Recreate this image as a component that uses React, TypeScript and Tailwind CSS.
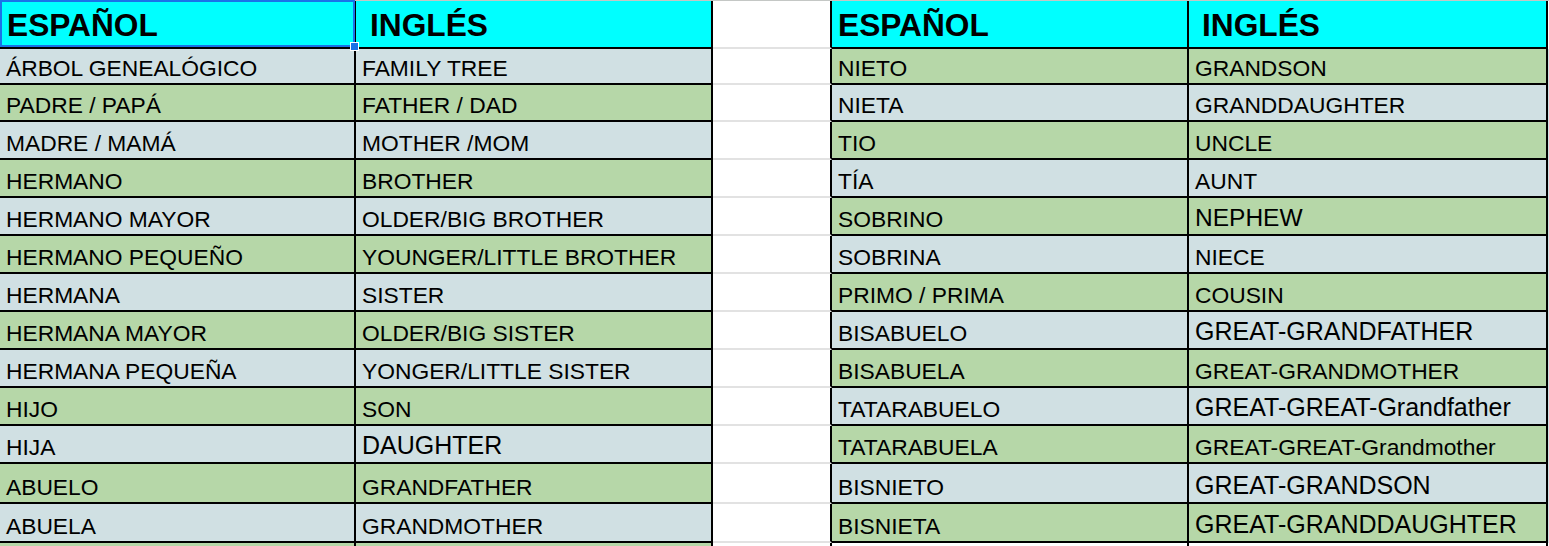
import React from "react";

type Row = {
  h: string;
  ca: string;
  a: string;
  b: string;
  bBig?: string;
  cd: string;
  d: string;
  e: string;
  eBig?: string;
};

const BLUE = "bg-[#d0e0e3]";
const GREEN = "bg-[#b6d7a8]";

const rows: Row[] = [
  { h: "h-[36px]", ca: BLUE, a: "ÁRBOL GENEALÓGICO", b: "FAMILY TREE", cd: GREEN, d: "NIETO", e: "GRANDSON" },
  { h: "h-[37px]", ca: GREEN, a: "PADRE / PAPÁ", b: "FATHER / DAD", cd: BLUE, d: "NIETA", e: "GRANDDAUGHTER" },
  { h: "h-[38px]", ca: BLUE, a: "MADRE / MAMÁ", b: "MOTHER /MOM", cd: GREEN, d: "TIO", e: "UNCLE" },
  { h: "h-[38px]", ca: GREEN, a: "HERMANO", b: "BROTHER", cd: BLUE, d: "TÍA", e: "AUNT" },
  { h: "h-[38px]", ca: BLUE, a: "HERMANO MAYOR", b: "OLDER/BIG BROTHER", cd: GREEN, d: "SOBRINO", e: "NEPHEW", eBig: "text-[24.5px]" },
  { h: "h-[38px]", ca: GREEN, a: "HERMANO PEQUEÑO", b: "YOUNGER/LITTLE BROTHER", cd: BLUE, d: "SOBRINA", e: "NIECE" },
  { h: "h-[38px]", ca: BLUE, a: "HERMANA", b: "SISTER", cd: GREEN, d: "PRIMO / PRIMA", e: "COUSIN" },
  { h: "h-[38px]", ca: GREEN, a: "HERMANA MAYOR", b: "OLDER/BIG SISTER", cd: BLUE, d: "BISABUELO", e: "GREAT-GRANDFATHER", eBig: "text-[25px]" },
  { h: "h-[38px]", ca: BLUE, a: "HERMANA PEQUEÑA", b: "YONGER/LITTLE SISTER", cd: GREEN, d: "BISABUELA", e: "GREAT-GRANDMOTHER" },
  { h: "h-[38px]", ca: GREEN, a: "HIJO", b: "SON", cd: BLUE, d: "TATARABUELO", e: "GREAT-GREAT-Grandfather", eBig: "text-[25px]" },
  { h: "h-[38px]", ca: BLUE, a: "HIJA", b: "DAUGHTER", bBig: "text-[25px]", cd: GREEN, d: "TATARABUELA", e: "GREAT-GREAT-Grandmother" },
  { h: "h-[40px]", ca: GREEN, a: "ABUELO", b: "GRANDFATHER", cd: BLUE, d: "BISNIETO", e: "GREAT-GRANDSON", eBig: "text-[25px]" },
  { h: "h-[39px]", ca: BLUE, a: "ABUELA", b: "GRANDMOTHER", cd: GREEN, d: "BISNIETA", e: "GREAT-GRANDDAUGHTER", eBig: "text-[25px]" },
];

const cellBase = "flex items-end pb-[2px] pl-[6px] border-r-2 border-b-2 border-black whitespace-nowrap overflow-hidden";

export default function App() {
  return (
    <div
      className="w-[1549px] h-[546px] overflow-hidden bg-white text-black text-[22.8px] leading-[1.15]"
      style={{ fontFamily: '"Liberation Sans", Arial, sans-serif' }}
    >
      {/* header */}
      <div className="relative flex h-[49px] border-t border-[#c4c7c5] font-bold text-[31.7px]">
        <div className="flex items-end pb-[4px] pl-[7px] w-[356px] border-r-2 border-b-2 border-black bg-[#00ffff]">ESPAÑOL</div>
        <div className="flex items-end pb-[4px] pl-[14px] w-[357px] border-r-2 border-b-2 border-black bg-[#00ffff]">INGLÉS</div>
        <div className="w-[119px] border-r-2 border-b-2 border-r-black border-b-[#e2e2e2] bg-white" />
        <div className="flex items-end pb-[4px] pl-[6px] w-[357px] border-r-2 border-b-2 border-black bg-[#00ffff]">ESPAÑOL</div>
        <div className="flex items-end pb-[4px] pl-[13px] w-[359px] border-r-2 border-b-2 border-black bg-[#00ffff]">INGLÉS</div>
        <div className="flex-1 bg-white" />
        {/* selection outline */}
        <div className="absolute left-0 top-[-1px] w-[355px] h-[47px] border-2 border-[#1a73e8]" />
        <div className="absolute left-[350px] top-[41px] w-[9px] h-[9px] bg-[#1a73e8] border border-white" />
      </div>

      {rows.map((r, i) => (
        <div key={i} className={`flex ${r.h}`}>
          <div className={`${cellBase} w-[356px] ${r.ca}`}>{r.a}</div>
          <div className={`${cellBase} w-[357px] ${r.ca} ${r.bBig ?? ""}`}>{r.b}</div>
          <div className="w-[119px] border-r-2 border-b-2 border-r-black border-b-[#e2e2e2] bg-white" />
          <div className={`${cellBase} w-[357px] ${r.cd}`}>{r.d}</div>
          <div className={`${cellBase} w-[359px] ${r.cd} ${r.eBig ?? ""}`}>{r.e}</div>
          <div className="flex-1 bg-[#d0e0e3]" />
        </div>
      ))}

      <div className="flex h-[10px]">
        <div className="w-[356px] border-r-2 border-black bg-[#b6d7a8]" />
        <div className="w-[357px] border-r-2 border-black bg-[#b6d7a8]" />
        <div className="w-[119px] border-r-2 border-black bg-white" />
        <div className="w-[357px] border-r-2 border-black bg-white" />
        <div className="w-[359px] border-r-2 border-black bg-white" />
        <div className="flex-1 bg-white" />
      </div>
    </div>
  );
}
